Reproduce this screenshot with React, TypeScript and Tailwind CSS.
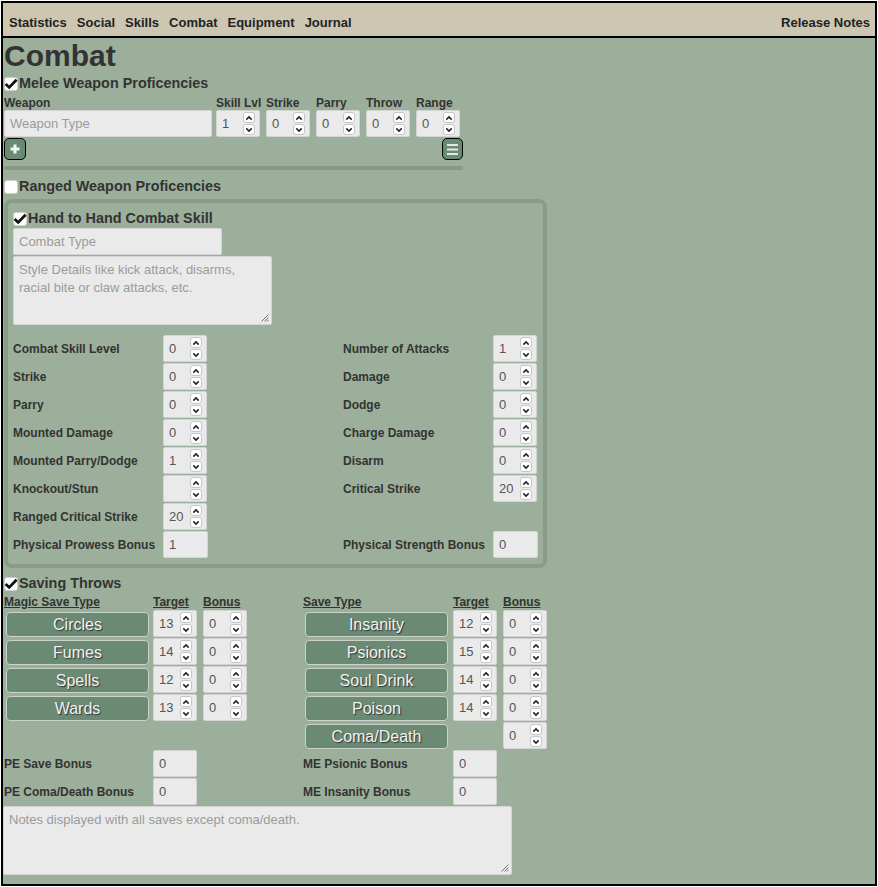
import React from "react";

const FONT = "font-['Liberation_Sans',Arial,sans-serif]";

function Check({ checked }: { checked: boolean }) {
  return (
    <span className="w-[14px] h-[14px] bg-white rounded-[3px] border border-[#cfcfcf] flex items-center justify-center shrink-0">
      {checked && (
        <svg width="14" height="14" viewBox="0 0 14 14" className="shrink-0">
          <path d="M1.6 7 L5.2 10.4 L12.6 2.8" fill="none" stroke="#111" strokeWidth="2.8" strokeLinejoin="miter" />
        </svg>
      )}
    </span>
  );
}

function Chevron({ up }: { up?: boolean }) {
  return (
    <svg width="8" height="6" viewBox="0 0 8 6">
      <path
        d={up ? "M1.3 4.6 L4 1.9 L6.7 4.6" : "M1.3 1.4 L4 4.1 L6.7 1.4"}
        fill="none"
        stroke="#222"
        strokeWidth="1.5"
      />
    </svg>
  );
}

function Spinner() {
  return (
    <span className="absolute right-[4px] top-[1px] flex flex-col gap-px">
      <span className="w-[12px] h-[11px] bg-white border border-[#c6c6c6] rounded-[3px] flex items-center justify-center">
        <Chevron up />
      </span>
      <span className="w-[12px] h-[11px] bg-white border border-[#c6c6c6] rounded-[3px] flex items-center justify-center">
        <Chevron />
      </span>
    </span>
  );
}

function Field({
  value,
  placeholder,
  className = "w-[44px]",
  spin = false,
}: {
  value?: string;
  placeholder?: string;
  className?: string;
  spin?: boolean;
}) {
  return (
    <div
      className={`relative h-[27px] bg-[#eaeaea] border border-[#d4d4d4] rounded-[2px] flex items-center pl-[5px] text-[13px] ${
        value ? "text-[#555]" : "text-[#9b9b9b]"
      } ${className}`}
    >
      {value || placeholder}
      {spin && <Spinner />}
    </div>
  );
}

function Grip() {
  return (
    <svg width="9" height="9" viewBox="0 0 9 9" className="absolute right-[2px] bottom-[2px]">
      <path d="M8.5 1.5 L1.5 8.5 M8.5 4.5 L4.5 8.5 M8.5 7 L7 8.5" stroke="#555" strokeWidth="0.8" />
    </svg>
  );
}

function Area({ text, className }: { text: string; className: string }) {
  return (
    <div
      className={`relative bg-[#eaeaea] border border-[#d4d4d4] rounded-[2px] px-[5px] pt-[4px] text-[13px] leading-[18px] text-[#9b9b9b] ${className}`}
    >
      {text}
      <Grip />
    </div>
  );
}

function SaveButton({ label }: { label: string }) {
  return (
    <div className="h-[27px] pt-[2px] pl-[2px]">
      <div className="w-[143px] h-[25px] bg-[#6a8a74] border border-[#c9d3c9] rounded-[4px] flex items-center justify-center pt-px text-[16px] text-[#f2f2f2] [text-shadow:1px_1px_1px_#333]">
        {label}
      </div>
    </div>
  );
}

const nav = ["Statistics", "Social", "Skills", "Combat", "Equipment", "Journal"];

const melee = ["Skill Lvl", "Strike", "Parry", "Throw", "Range"];
const meleeVals = ["1", "0", "0", "0", "0"];

const h2h: [string, string, boolean][][] = [
  [["Combat Skill Level", "0", true], ["Number of Attacks", "1", true]],
  [["Strike", "0", true], ["Damage", "0", true]],
  [["Parry", "0", true], ["Dodge", "0", true]],
  [["Mounted Damage", "0", true], ["Charge Damage", "0", true]],
  [["Mounted Parry/Dodge", "1", true], ["Disarm", "0", true]],
  [["Knockout/Stun", "", true], ["Critical Strike", "20", true]],
  [["Ranged Critical Strike", "20", true], ["", "", false]],
  [["Physical Prowess Bonus", "1", false], ["Physical Strength Bonus", "0", false]],
];

const saves: [string, string, string, string, string, string][] = [
  ["Circles", "13", "0", "Insanity", "12", "0"],
  ["Fumes", "14", "0", "Psionics", "15", "0"],
  ["Spells", "12", "0", "Soul Drink", "14", "0"],
  ["Wards", "13", "0", "Poison", "14", "0"],
];

export default function App() {
  return (
    <div className={`${FONT} text-[#333]`}>
      <div className="mt-px ml-px w-[876px] h-[885px] border-2 border-black bg-[#9caf9a] overflow-hidden">
        {/* Nav */}
        <div className="h-[35px] bg-[#cdc7b1] border-b-2 border-black flex items-center justify-between pt-[6px] pl-[6px] pr-[5px] text-[13px] font-bold text-[#222]">
          <div className="flex gap-[10px]">
            {nav.map((n) => (
              <span key={n}>{n}</span>
            ))}
          </div>
          <span>Release Notes</span>
        </div>

        <div className="px-px">
          <h1 className="text-[30px] leading-[35px] font-bold">Combat</h1>

          {/* Melee */}
          <div className="h-[21px] pt-px flex items-center gap-px text-[14.4px] font-bold">
            <Check checked />
            <span>Melee Weapon Proficencies</span>
          </div>
          <div className="grid grid-cols-[212px_50px_50px_50px_50px_50px] h-[16px] pb-[2px] items-center text-[12px] font-bold">
            <span>Weapon</span>
            {melee.map((m) => (
              <span key={m}>{m}</span>
            ))}
          </div>
          <div className="grid grid-cols-[212px_50px_50px_50px_50px_50px]">
            <Field placeholder="Weapon Type" className="w-[208px]" />
            {meleeVals.map((v, i) => (
              <Field key={i} value={v} spin />
            ))}
          </div>
          <div className="w-[459px] flex justify-between mt-px">
            <div className="w-[22px] h-[22px] bg-[#6a8a74] border border-black rounded-[5px] flex items-center justify-center">
              <svg width="12" height="12" viewBox="0 0 12 12">
                <path d="M6 1.5 V10.5 M1.5 6 H10.5" stroke="#f4f4f4" strokeWidth="3" />
              </svg>
            </div>
            <div className="w-[21px] h-[22px] bg-[#6a8a74] border border-black rounded-[5px] flex items-center justify-center">
              <svg width="13" height="13" viewBox="0 0 13 13">
                <path d="M1 2 H12 M1 6.5 H12 M1 11 H12" stroke="#e6e6e6" strokeWidth="2.2" />
              </svg>
            </div>
          </div>
          <div className="w-[459px] h-[4px] mt-[6px] bg-[#879b85]" />

          {/* Ranged */}
          <div className="h-[20px] mt-[6px] pt-px flex items-center gap-px text-[14.4px] font-bold">
            <Check checked={false} />
            <span>Ranged Weapon Proficencies</span>
          </div>

          {/* Hand to hand */}
          <div className="mt-[3px] w-[543px] border-[4px] border-[#889d86] rounded-[8px] px-[5px] pt-[5px] pb-[6px]">
            <div className="h-[20px] pt-[2px] flex items-center gap-px text-[14.4px] font-bold">
              <Check checked />
              <span>Hand to Hand Combat Skill</span>
            </div>
            <Field placeholder="Combat Type" className="w-[209px] h-[26px]" />
            <Area
              text="Style Details like kick attack, disarms, racial bite or claw attacks, etc."
              className="w-[259px] h-[69px] mt-px"
            />
            <div className="mt-[10px] flex flex-col gap-px">
              {h2h.map((row, r) => (
                <div key={r} className="grid grid-cols-[330px_1fr] h-[27px]">
                  {row.map(([label, val, spin], c) => (
                    <div key={c} className="flex items-center">
                      {label && (
                        <>
                          <span className="w-[150px] text-[12px] font-bold">{label}</span>
                          <Field value={val} spin={spin} className={spin ? "w-[44px]" : "w-[45px]"} />
                        </>
                      )}
                    </div>
                  ))}
                </div>
              ))}
            </div>
          </div>

          {/* Saving throws */}
          <div className="h-[20px] mt-[5px] pt-px flex items-center gap-px text-[14.4px] font-bold">
            <Check checked />
            <span>Saving Throws</span>
          </div>
          <div className="grid grid-cols-[149px_50px_50px_50px_150px_50px_50px] h-[17px] items-center text-[12px] font-bold underline">
            <span>Magic Save Type</span>
            <span>Target</span>
            <span>Bonus</span>
            <span />
            <span>Save Type</span>
            <span>Target</span>
            <span>Bonus</span>
          </div>
          <div className="grid grid-cols-[149px_50px_50px_50px_150px_50px_50px] gap-y-px">
            {saves.map(([a, at, ab, b, bt, bb]) => (
              <React.Fragment key={a}>
                <SaveButton label={a} />
                <Field value={at} spin />
                <Field value={ab} spin />
                <div />
                <SaveButton label={b} />
                <Field value={bt} spin />
                <Field value={bb} spin />
              </React.Fragment>
            ))}
            <div />
            <div />
            <div />
            <div />
            <SaveButton label="Coma/Death" />
            <div />
            <Field value="0" spin />

            <div className="flex items-center text-[12px] font-bold">PE Save Bonus</div>
            <Field value="0" />
            <div />
            <div />
            <div className="flex items-center text-[12px] font-bold">ME Psionic Bonus</div>
            <Field value="0" />
            <div />

            <div className="flex items-center text-[12px] font-bold">PE Coma/Death Bonus</div>
            <Field value="0" />
            <div />
            <div />
            <div className="flex items-center text-[12px] font-bold">ME Insanity Bonus</div>
            <Field value="0" />
            <div />
          </div>
          <Area
            text="Notes displayed with all saves except coma/death."
            className="w-[509px] h-[69px] mt-px -ml-px"
          />
        </div>
      </div>
    </div>
  );
}
